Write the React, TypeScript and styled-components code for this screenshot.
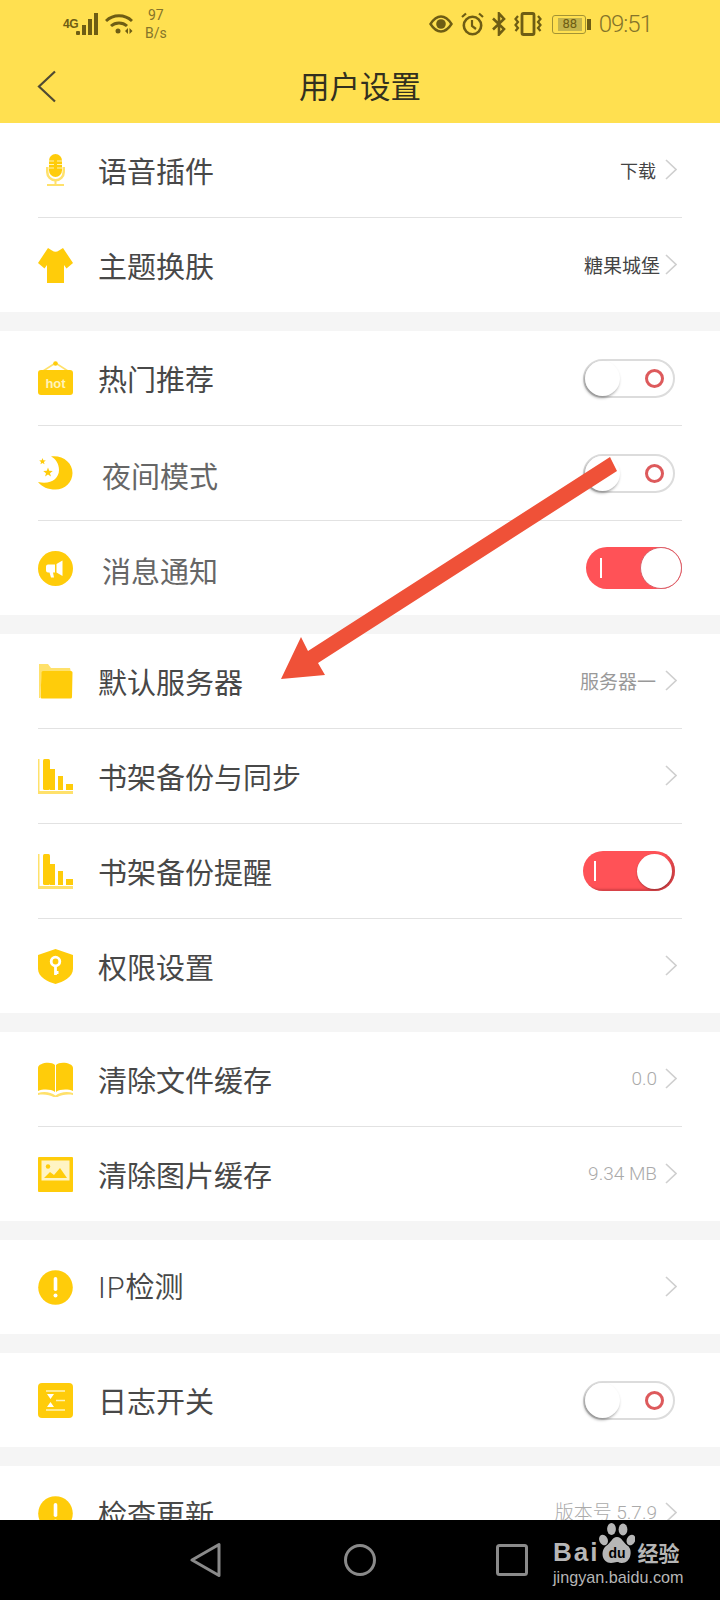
import React from "react";
import styled, { createGlobalStyle } from "styled-components";

const YELLOW = "#ffcc0a";
const LIGHT = "#ffe16b";
const OLIVE = "#6e5d14";

const GlobalStyle = createGlobalStyle`
  html, body {
    margin: 0;
    padding: 0;
    background: #f5f5f5;
  }
  * {
    box-sizing: border-box;
  }
`;

type IconName =
  | "mic"
  | "shirt"
  | "hot"
  | "moon"
  | "horn"
  | "folder"
  | "bars"
  | "shield"
  | "book"
  | "image"
  | "alert"
  | "log";

interface RowData {
  icon: IconName;
  label: string;
  latin?: string;
  indent?: boolean;
  muted?: boolean;
  value?: string;
  tone?: "dark" | "grey" | "thin";
  tight?: boolean;
  chevron?: boolean;
  toggle?: "off" | "on" | "onLarge";
}

const groups: RowData[][] = [
  [
    { icon: "mic", label: "语音插件", value: "下载", tone: "dark", chevron: true },
    { icon: "shirt", label: "主题换肤", value: "糖果城堡", tone: "dark", tight: true, chevron: true },
  ],
  [
    { icon: "hot", label: "热门推荐", toggle: "off" },
    { icon: "moon", label: "夜间模式", indent: true, muted: true, toggle: "off" },
    { icon: "horn", label: "消息通知", indent: true, muted: true, toggle: "onLarge" },
  ],
  [
    { icon: "folder", label: "默认服务器", value: "服务器一", tone: "grey", chevron: true },
    { icon: "bars", label: "书架备份与同步", chevron: true },
    { icon: "bars", label: "书架备份提醒", toggle: "on" },
    { icon: "shield", label: "权限设置", chevron: true },
  ],
  [
    { icon: "book", label: "清除文件缓存", value: "0.0", tone: "thin", chevron: true },
    { icon: "image", label: "清除图片缓存", value: "9.34 MB", tone: "thin", chevron: true },
  ],
  [{ icon: "alert", latin: "IP", label: "检测", chevron: true }],
  [{ icon: "log", label: "日志开关", toggle: "off" }],
  [{ icon: "alert", label: "检查更新", value: "版本号 5.7.9", tone: "thin", chevron: true }],
];

const starPoints = (cx: number, cy: number, r: number) =>
  Array.from({ length: 10 }, (_, i) => {
    const a = -Math.PI / 2 + (i * Math.PI) / 5;
    const d = i % 2 === 0 ? r : r * 0.42;
    return `${cx + d * Math.cos(a)},${cy + d * Math.sin(a)}`;
  }).join(" ");

const RowIcon: React.FC<{ name: IconName }> = ({ name }) => {
  switch (name) {
    case "mic":
      return (
        <IconSvg viewBox="0 0 35 35">
          <path d="M8 14v5a9.5 9.5 0 0 0 19 0v-5h-2.500v5a7 7 0 0 1-14 0v-5z" fill={LIGHT} />
          <rect x="11" y="1" width="13" height="23" rx="6.500" fill={YELLOW} />
          <path d="M11 8h5M19 8h5M11 11.500h5M19 11.500h5M11 15h5M19 15h5" stroke="#fff3b8" strokeWidth="1" />
          <path d="M16.500 27h2v4h-2z" fill={LIGHT} />
          <rect x="9" y="31" width="17" height="2" fill={LIGHT} />
        </IconSvg>
      );
    case "shirt":
      return (
        <IconSvg viewBox="0 0 35 35">
          <path d="M10 0l4 2.500q3.500 2.500 7 0L25 0l10 15-6.500 5.500L26 17v18H9V17l-2.500 3.500L0 15z" fill={YELLOW} />
        </IconSvg>
      );
    case "hot":
      return (
        <IconSvg viewBox="0 0 35 35">
          <path d="M5 10L17.500 2 30 10" stroke={LIGHT} strokeWidth="1.500" fill="none" />
          <circle cx="17.500" cy="2.500" r="2.300" fill={YELLOW} />
          <rect x="0" y="9" width="35" height="25" rx="3" fill={YELLOW} />
          <HotText x="17.500" y="27" textAnchor="middle">
            hot
          </HotText>
        </IconSvg>
      );
    case "moon":
      return (
        <IconSvg viewBox="0 0 35 35">
          <path d="M13 .5C25-1 34.500 7 34.500 17c0 9-7.500 16.500-17 16.500C10 33.500 4 31 0 26c12 3 21-3 21-12 0-6-3-11-8-13.500z" fill={YELLOW} />
          <polygon points={starPoints(4.500, 5.500, 3.500)} fill={YELLOW} />
          <polygon points={starPoints(10, 16.500, 5)} fill={YELLOW} />
        </IconSvg>
      );
    case "horn":
      return (
        <IconSvg viewBox="0 0 35 35">
          <circle cx="17.500" cy="17.500" r="17.500" fill={YELLOW} />
          <path d="M10 13.500h7v8h-2l1 5h-3l-1.500-5H10a2 2 0 0 1-2-2v-4a2 2 0 0 1 2-2z" fill="#fff" />
          <path d="M18.500 13l6-3.500v15.500l-6-3.500z" fill="#fff" />
        </IconSvg>
      );
    case "folder":
      return (
        <IconSvg viewBox="0 0 35 35">
          <path d="M1 0h9l3 4h19l1 4H4L2 34H1z" fill={LIGHT} />
          <path d="M5 7h28a1.500 1.500 0 0 1 1.500 1.500L34 33a1.500 1.500 0 0 1-1.500 1.500H4A1.500 1.500 0 0 1 2.500 33L3.500 8.500A1.500 1.500 0 0 1 5 7z" fill={YELLOW} />
        </IconSvg>
      );
    case "bars":
      return (
        <IconSvg viewBox="0 0 35 35">
          <path d="M0 0h1.500v32H35v3H0z" fill={LIGHT} />
          <rect x="5" y="0" width="7" height="31" rx="1.500" fill={YELLOW} />
          <rect x="12" y="10" width="5" height="21" fill={YELLOW} />
          <rect x="20" y="17" width="5" height="14" fill={YELLOW} />
          <rect x="28" y="25" width="7" height="6" fill={YELLOW} />
        </IconSvg>
      );
    case "shield":
      return (
        <IconSvg viewBox="0 0 35 35">
          <path d="M17.500 0L35 6v14c0 8-10 13-17.500 15C10 33 0 28 0 20V6z" fill={YELLOW} />
          <circle cx="17.500" cy="12.500" r="4.300" fill="none" stroke="#fff" strokeWidth="2.800" />
          <path d="M17.500 17v9M17.500 23.500h3" stroke="#fff" strokeWidth="2.800" fill="none" />
        </IconSvg>
      );
    case "book":
      return (
        <IconSvg viewBox="0 0 35 35">
          <path d="M0 6C0 1 13-1 17 3v27C13 27 5 27 0 29z" fill={YELLOW} />
          <path d="M35 6C35 1 22-1 18 3v27C22 27 30 27 35 29z" fill={YELLOW} />
          <path d="M0 31c6-2 13-1 17.500 2.500C22 30 29 29 35 31v2c-6-1-12 0-15.500 2h-4C12 33 6 32 0 33z" fill={LIGHT} />
        </IconSvg>
      );
    case "image":
      return (
        <IconSvg viewBox="0 0 35 35">
          <rect x="0" y="0" width="35" height="35" rx="1" fill={YELLOW} />
          <rect x="3.500" y="3.500" width="28" height="20" fill="#fff4c4" />
          <circle cx="10" cy="9.500" r="2.200" fill={YELLOW} />
          <path d="M6 21l6-6 4 3 6-7 7 10z" fill={YELLOW} />
        </IconSvg>
      );
    case "alert":
      return (
        <IconSvg viewBox="0 0 35 35">
          <circle cx="17.500" cy="17.500" r="17.300" fill={YELLOW} />
          <rect x="15.700" y="7" width="3.600" height="14" rx="1.800" fill="#fff" />
          <circle cx="17.500" cy="25.500" r="2" fill="#fff" />
        </IconSvg>
      );
    case "log":
      return (
        <IconSvg viewBox="0 0 35 35">
          <rect x="0" y="0" width="35" height="35" rx="4" fill={YELLOW} />
          <path d="M8 8h19M8 27h19M18 17.500h9" stroke="#fff3b8" strokeWidth="1.500" />
          <path d="M9 11h7l-3.500 5zM9 24h7l-3.500-5z" fill="#fff" />
        </IconSvg>
      );
  }
};

const Toggle: React.FC<{ kind: "off" | "on" | "onLarge" }> = ({ kind }) =>
  kind === "off" ? (
    <OffTrack>
      <OffKnob />
      <Ring />
    </OffTrack>
  ) : kind === "on" ? (
    <OnTrack>
      <OnBar />
      <OnKnob />
    </OnTrack>
  ) : (
    <LargeTrack>
      <OnBar />
      <LargeKnob />
    </LargeTrack>
  );

const App: React.FC = () => {
  return (
    <Screen>
      <GlobalStyle />
      <Header>
        <StatusBar>
          <StatusLeft>
            <NetType>4G</NetType>
            <svg width="23" height="23" viewBox="0 0 23 23">
              <rect x="0" y="18" width="4" height="4" rx="1" fill={OLIVE} />
              <rect x="6" y="12" width="4" height="10" fill={OLIVE} />
              <rect x="12" y="6" width="4" height="16" fill={OLIVE} />
              <rect x="18" y="0" width="4" height="22" fill={OLIVE} />
            </svg>
            <WifiSvg width="28" height="22" viewBox="0 0 28 22">
              <path d="M1 8a19 19 0 0 1 26 0M6 13a12 12 0 0 1 16 0" stroke={OLIVE} strokeWidth="3" fill="none" />
              <circle cx="13" cy="18" r="2.500" fill={OLIVE} />
              <path d="M23 15v6l-3-3zM24.500 15v6l3-3z" fill={OLIVE} />
            </WifiSvg>
            <Speed>
              <span>97</span>
              <span>B/s</span>
            </Speed>
          </StatusLeft>
          <StatusRight>
            <svg width="24" height="18" viewBox="0 0 24 18">
              <path d="M1.500 9C5 3.500 8.500 1.500 12 1.500S19 3.500 22.500 9C19 14.500 15.500 16.500 12 16.500S5 14.500 1.500 9z" fill="none" stroke={OLIVE} strokeWidth="2.400" />
              <circle cx="12" cy="9" r="4.800" fill={OLIVE} />
            </svg>
            <svg width="23" height="24" viewBox="0 0 23 24">
              <circle cx="11.500" cy="13.500" r="8.700" fill="none" stroke={OLIVE} strokeWidth="2.600" />
              <path d="M11 8v6l4 3M1 5l4-3.500M22 5l-4-3.500" fill="none" stroke={OLIVE} strokeWidth="2.200" />
            </svg>
            <svg width="14" height="24" viewBox="0 0 14 24">
              <path d="M1 6.500l11 10.500-5 5.500V1.500l5 5.500L1 17.500" fill="none" stroke={OLIVE} strokeWidth="2.600" />
            </svg>
            <svg width="28" height="24" viewBox="0 0 28 24">
              <rect x="8" y="1.500" width="12" height="21" rx="1.500" fill="none" stroke={OLIVE} strokeWidth="2.800" />
              <path d="M4 4L1.500 7 4 10 1.500 13 4 16 1.500 19M24 4l2.500 3L24 10l2.500 3L24 16l2.500 3" fill="none" stroke={OLIVE} strokeWidth="2.200" />
            </svg>
            <Battery>
              <BatteryBody>
                <BatteryFill>88</BatteryFill>
              </BatteryBody>
              <BatteryTip />
            </Battery>
            <Clock>09:51</Clock>
          </StatusRight>
        </StatusBar>
        <TitleBar>
          <BackButton width="20" height="33" viewBox="0 0 20 33">
            <path d="M18 1.500L2 16.500 18 31.500" fill="none" stroke="#4f4a33" strokeWidth="2.200" />
          </BackButton>
          <Title>用户设置</Title>
        </TitleBar>
      </Header>

      <List>
        {groups.map((rows, i) => (
          <Group key={i}>
            {rows.map((row) => (
              <Row key={row.label}>
                <RowIcon name={row.icon} />
                <Label $indent={row.indent} $muted={row.muted}>
                  {row.latin && <LatinPart>{row.latin}</LatinPart>}
                  {row.label}
                </Label>
                <RowEnd>
                  {row.value && (
                    <Value $tone={row.tone} $tight={row.tight}>
                      {row.value}
                    </Value>
                  )}
                  {row.chevron && (
                    <Chevron width="12" height="21" viewBox="0 0 12 21">
                      <path d="M1 1l10 9.500L1 20" fill="none" stroke="#cfcfcf" strokeWidth="1.600" />
                    </Chevron>
                  )}
                  {row.toggle && <Toggle kind={row.toggle} />}
                </RowEnd>
              </Row>
            ))}
          </Group>
        ))}
      </List>

      <NavBar>
        <svg width="34" height="36" viewBox="0 0 34 36">
          <path d="M2 18L29 2.500v31z" fill="none" stroke="#8a8a8a" strokeWidth="3" strokeLinejoin="round" />
        </svg>
        <svg width="32" height="32" viewBox="0 0 32 32">
          <circle cx="16" cy="16" r="14.500" fill="none" stroke="#8a8a8a" strokeWidth="3" />
        </svg>
        <svg width="32" height="32" viewBox="0 0 32 32">
          <rect x="1.500" y="1.500" width="29" height="29" rx="2" fill="none" stroke="#8a8a8a" strokeWidth="3" />
        </svg>
      </NavBar>

      <Watermark>
        <BaiduRow>
          <BaiText>Bai</BaiText>
          <Paw width="36" height="41" viewBox="0 0 36 41">
            <ellipse cx="4.500" cy="17" rx="4.200" ry="5.400" fill="#b6b6b6" transform="rotate(-25 4.500 17)" />
            <ellipse cx="12.500" cy="6" rx="4.400" ry="6" fill="#b6b6b6" />
            <ellipse cx="24" cy="6.500" rx="4.400" ry="6" fill="#b6b6b6" />
            <ellipse cx="32" cy="17" rx="4.200" ry="5.400" fill="#b6b6b6" transform="rotate(25 32 17)" />
            <path d="M18 14c5 0 6 6 11 9 5 4 3 17-6 17-3 0-3-1-5-1s-3 1-6 1C3 40 1 28 7 23c5-3 6-9 11-9z" fill="#b6b6b6" />
            <PawText x="18" y="35" textAnchor="middle">
              du
            </PawText>
          </Paw>
          <JingyanCn>经验</JingyanCn>
        </BaiduRow>
        <BaiduUrl>jingyan.baidu.com</BaiduUrl>
      </Watermark>

      <ArrowMark width="350" height="235" viewBox="275 450 350 235">
        <polygon points="610,457 308,651 301,637 281,679 325,675 318,663 617,471" fill="#ef5138" />
      </ArrowMark>
    </Screen>
  );
};

export default App;

const Screen = styled.div`
  position: relative;
  width: 720px;
  height: 1600px;
  display: flex;
  flex-direction: column;
  overflow: hidden;
  background: #f5f5f5;
  font-family: "Noto Sans CJK SC", "Noto Sans", sans-serif;
`;

const Header = styled.header`
  flex: none;
  height: 123px;
  background: #ffe050;
`;

const StatusBar = styled.div`
  height: 48px;
  display: flex;
  align-items: center;
  justify-content: space-between;
  padding: 0 68px 0 63px;
  color: ${OLIVE};
`;

const StatusLeft = styled.div`
  display: flex;
  align-items: center;
`;

const NetType = styled.span`
  align-self: flex-start;
  margin-top: 12px;
  width: 13px;
  font-family: "Liberation Sans", sans-serif;
  font-size: 12px;
  font-weight: 700;
  line-height: 12px;
  letter-spacing: -0.5px;
`;

const WifiSvg = styled.svg`
  margin-left: 6px;
`;

const Speed = styled.div`
  display: flex;
  flex-direction: column;
  align-items: center;
  margin-left: 12px;
  font-family: Roboto, sans-serif;
  font-size: 14px;
  line-height: 18px;
  color: #85742a;
`;

const StatusRight = styled.div`
  display: flex;
  align-items: center;
  gap: 8px;
`;

const Battery = styled.div`
  display: flex;
  align-items: center;
  gap: 1px;
  margin-left: 2px;
`;

const BatteryBody = styled.div`
  width: 34px;
  height: 19px;
  padding: 2px 3px 2px 5px;
  border: 1.500px solid #a39334;
  border-radius: 3px;
`;

const BatteryFill = styled.div`
  height: 100%;
  background: #c5b44c;
  font-family: Roboto, sans-serif;
  font-size: 13px;
  line-height: 12px;
  text-align: center;
  color: ${OLIVE};
`;

const BatteryTip = styled.div`
  width: 4px;
  height: 11px;
  background: ${OLIVE};
`;

const Clock = styled.span`
  font-family: Roboto, sans-serif;
  font-size: 24px;
  font-weight: 300;
  line-height: 28px;
  letter-spacing: -1px;
  color: #85742a;
`;

const TitleBar = styled.div`
  position: relative;
  height: 75px;
  display: flex;
  align-items: center;
  justify-content: center;
`;

const BackButton = styled.svg`
  position: absolute;
  left: 37px;
  top: 22px;
`;

const Title = styled.h1`
  margin: 0 0 2px;
  font-size: 30.500px;
  font-weight: 400;
  line-height: 40px;
  color: #33301f;
`;

const List = styled.main`
  flex: 1;
  min-height: 0;
  display: flex;
  flex-direction: column;
  gap: 19px;
  overflow: hidden;
`;

const Group = styled.section`
  flex: none;
  background: #fff;
  padding: 0 38px;
`;

const Row = styled.div`
  height: 95px;
  display: flex;
  align-items: center;
  border-bottom: 1px solid #e2e2e2;

  &:last-child {
    height: 94px;
    border-bottom: none;
  }
`;

const IconSvg = styled.svg`
  flex: none;
  width: 35px;
  height: 35px;
`;

const HotText = styled.text`
  font-family: "Liberation Sans", sans-serif;
  font-size: 13px;
  font-weight: 700;
  fill: #fff3b8;
`;

const Label = styled.span<{ $indent?: boolean; $muted?: boolean }>`
  margin: ${(p) => (p.$indent ? "3px 0 0 29px" : "0 0 1px 25px")};
  font-size: 29px;
  line-height: 40px;
  color: ${(p) => (p.$muted ? "#666" : "#484848")};
`;

const LatinPart = styled.span`
  font-family: Roboto, sans-serif;
  font-weight: 300;
  letter-spacing: 1px;
`;

const RowEnd = styled.div`
  margin-left: auto;
  display: flex;
  align-items: center;
`;

const Value = styled.span<{ $tone?: "dark" | "grey" | "thin"; $tight?: boolean }>`
  margin-right: ${(p) => (p.$tight ? 5 : p.$tone === "thin" ? 8 : 9)}px;
  font-family: ${(p) => (p.$tone === "thin" ? 'Roboto, "Noto Sans CJK SC", sans-serif' : '"Noto Sans CJK SC", sans-serif')};
  font-size: ${(p) => (p.$tone === "dark" && !p.$tight ? 18 : 19)}px;
  font-weight: ${(p) => (p.$tone === "thin" ? 300 : 400)};
  line-height: 26px;
  color: ${(p) => (p.$tone === "dark" ? "#444" : p.$tone === "grey" ? "#999" : "#aaa")};
`;

const Chevron = styled.svg`
  margin-right: 5px;
  margin-bottom: 2px;
`;

const OffTrack = styled.div`
  width: 92px;
  height: 39px;
  margin-right: 7px;
  padding-right: 9px;
  display: flex;
  align-items: center;
  justify-content: space-between;
  border: 2px solid #dcdcdc;
  border-radius: 20px;
  background: #fff;
`;

const OffKnob = styled.div`
  width: 35px;
  height: 35px;
  border-radius: 50%;
  background: #fff;
  box-shadow: -1px 2px 3px rgba(0, 0, 0, 0.35);
`;

const Ring = styled.div`
  width: 19px;
  height: 19px;
  border: 3px solid #dd5a5c;
  border-radius: 50%;
`;

const OnTrack = styled.div`
  width: 92px;
  height: 40px;
  margin-right: 7px;
  padding: 0 3px 0 11px;
  display: flex;
  align-items: center;
  justify-content: space-between;
  border-radius: 20px;
  background: #ff5257;
  box-shadow: inset -3px -2px 2px rgba(150, 40, 45, 0.4);
`;

const LargeTrack = styled.div`
  width: 96px;
  height: 42px;
  padding-left: 14px;
  display: flex;
  align-items: center;
  justify-content: space-between;
  border-radius: 21px;
  background: #ff5257;
`;

const OnBar = styled.div`
  width: 2px;
  height: 20px;
  background: #fff;
`;

const OnKnob = styled.div`
  width: 35px;
  height: 35px;
  border-radius: 50%;
  background: #fff;
  box-shadow: 0 1px 2px rgba(0, 0, 0, 0.3);
`;

const LargeKnob = styled.div`
  width: 42px;
  height: 42px;
  border: 1px solid #d8606a;
  border-radius: 50%;
  background: #fff;
`;

const NavBar = styled.nav`
  flex: none;
  height: 80px;
  padding-left: 190px;
  display: flex;
  align-items: center;
  gap: 120px;
  background: #000;
`;

const Watermark = styled.div`
  position: absolute;
  left: 553px;
  top: 1523px;
  width: 130px;
  color: #b6b6b6;
`;

const BaiduRow = styled.div`
  display: flex;
  align-items: flex-end;
  height: 41px;
`;

const BaiText = styled.span`
  font-family: "Liberation Sans", sans-serif;
  font-size: 26px;
  font-weight: 700;
  line-height: 24px;
  letter-spacing: 2px;
`;

const Paw = styled.svg`
  flex: none;
`;

const PawText = styled.text`
  font-family: "Liberation Sans", sans-serif;
  font-size: 14px;
  font-weight: 700;
  fill: #000;
`;

const JingyanCn = styled.span`
  margin-left: 2px;
  font-size: 21px;
  font-weight: 700;
  line-height: 24px;
`;

const BaiduUrl = styled.div`
  margin-top: 3px;
  font-family: "Liberation Sans", sans-serif;
  font-size: 16.200px;
  line-height: 20px;
  white-space: nowrap;
`;

const ArrowMark = styled.svg`
  position: absolute;
  left: 275px;
  top: 450px;
`;
